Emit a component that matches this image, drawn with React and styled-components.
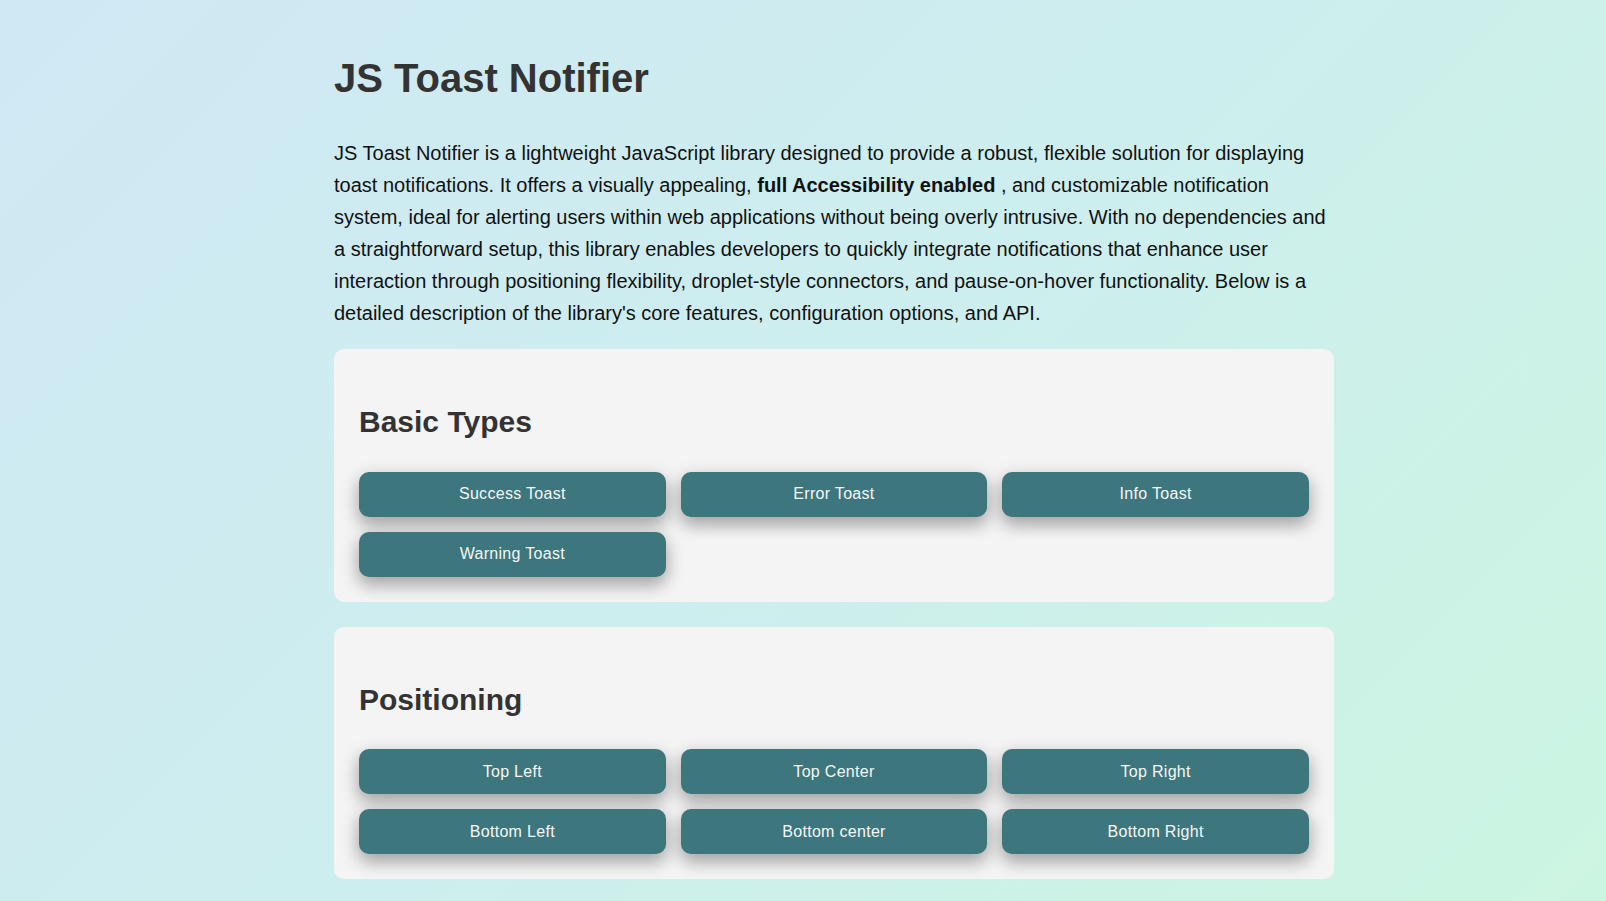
import React from "react";
import styled, { createGlobalStyle } from "styled-components";

const GlobalStyle = createGlobalStyle`
  html, body {
    margin: 0;
    padding: 0;
    overflow: hidden;
  }
  body {
    font-family: "Liberation Sans", Arial, sans-serif;
  }
  * { box-sizing: border-box; }
`;

const Page = styled.div`
  min-height: 100vh;
  background: linear-gradient(135deg, #d0e8f4 0%, #cdeeee 50%, #ccf5e1 100%);
  padding: 55px 0 0 334px;
`;

const Content = styled.main`
  width: 1000px;
`;

const Title = styled.h1`
  margin: 0;
  font-size: 40px;
  line-height: 46px;
  font-weight: 700;
  color: #333;
`;

const Intro = styled.p`
  margin: 36px 0 20px;
  font-size: 20px;
  line-height: 32px;
  color: #111;
`;

const Card = styled.section`
  background: #f4f4f4;
  border-radius: 10px;
  padding: 25px;
  margin-bottom: 25px;
`;

const CardTitle = styled.h2`
  margin: 31px 0 32px;
  font-size: 30px;
  line-height: 34.5px;
  font-weight: 700;
  color: #333;
`;

const ButtonGrid = styled.div`
  display: grid;
  grid-template-columns: repeat(3, 1fr);
  gap: 15px;
`;

const ActionButton = styled.button`
  height: 45px;
  border: none;
  border-radius: 10px;
  background: #3d767c;
  color: #f7f7f7;
  font-family: "Liberation Sans", Arial, sans-serif;
  font-size: 16px;
  letter-spacing: 0.3px;
  cursor: pointer;
  box-shadow: 0 8px 16px 0 rgba(0, 0, 0, 0.2), 0 6px 20px 0 rgba(0, 0, 0, 0.19);
`;

const sections = [
  {
    title: "Basic Types",
    buttons: ["Success Toast", "Error Toast", "Info Toast", "Warning Toast"],
  },
  {
    title: "Positioning",
    buttons: ["Top Left", "Top Center", "Top Right", "Bottom Left", "Bottom center", "Bottom Right"],
  },
];

export default function App() {
  return (
    <>
      <GlobalStyle />
      <Page>
        <Content>
          <Title>JS Toast Notifier</Title>
          <Intro>
            JS Toast Notifier is a lightweight JavaScript library designed to provide a robust, flexible
            solution for displaying toast notifications. It offers a visually appealing,{" "}
            <strong>full Accessibility enabled</strong> , and customizable notification system, ideal for
            alerting users within web applications without being overly intrusive. With no dependencies
            and a straightforward setup, this library enables developers to quickly integrate
            notifications that enhance user interaction through positioning flexibility, droplet-style
            connectors, and pause-on-hover functionality. Below is a detailed description of the
            library's core features, configuration options, and API.
          </Intro>
          {sections.map((s) => (
            <Card key={s.title}>
              <CardTitle>{s.title}</CardTitle>
              <ButtonGrid>
                {s.buttons.map((b) => (
                  <ActionButton key={b}>{b}</ActionButton>
                ))}
              </ButtonGrid>
            </Card>
          ))}
        </Content>
      </Page>
    </>
  );
}
